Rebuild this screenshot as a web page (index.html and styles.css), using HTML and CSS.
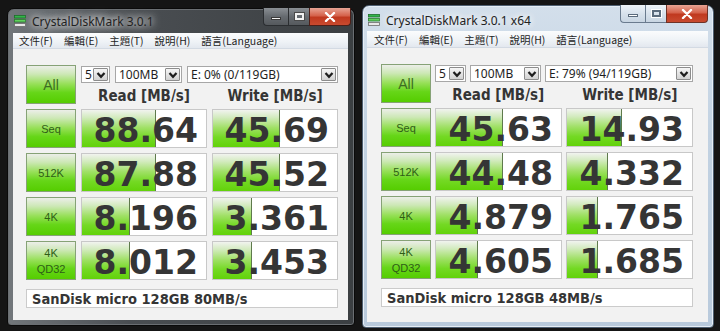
FILE: index.html
```html
<!DOCTYPE html>
<html lang="zh-Hant">
<head>
  <meta charset="UTF-8">
  <title>CrystalDiskMark</title>
  <link rel="stylesheet" href="styles.css">
</head>
<body>
  <div class="desktop">

    <!-- 32-bit run -->
    <div class="window dark">
      <div class="titlebar">
        <svg class="app-icon" width="12" height="12" viewBox="0 0 12 12">
          <rect x="0.5" y="0.5" width="11" height="2.5" fill="#33b44a" stroke="#1d6e2a" stroke-width="0.8"/>
          <rect x="0.5" y="4.5" width="11" height="2.5" fill="#5fd25c" stroke="#2b7d30" stroke-width="0.8"/>
          <rect x="0.5" y="8.5" width="11" height="3" fill="#e8e8e8" stroke="#6b6b6b" stroke-width="0.8"/>
        </svg>
        <span class="title">CrystalDiskMark 3.0.1</span>
        <div class="caption">
          <span class="cap min"><i></i></span>
          <span class="cap max"><i></i></span>
          <span class="cap close">
            <svg width="12" height="10" viewBox="0 0 12 10"><path d="M2 1 L10 9 M10 1 L2 9" stroke="#fff" stroke-width="2.4" stroke-linecap="round"/></svg>
          </span>
        </div>
      </div>
      <div class="menubar">
        <span>文件(F)</span><span>編輯(E)</span><span>主題(T)</span><span>說明(H)</span><span>語言(Language)</span>
      </div>
      <div class="client">
        <div class="bench">
          <div class="btn all">All</div>
          <div class="controls">
            <div class="combos">
              <div class="combo count"><span>5</span><b class="arrow"><svg width="10" height="8" viewBox="0 0 10 8"><path d="M1.5 2 L5 5.8 L8.5 2" fill="none" stroke="#1e1e1e" stroke-width="2.2"/></svg></b></div>
              <div class="combo size"><span>100MB</span><b class="arrow"><svg width="10" height="8" viewBox="0 0 10 8"><path d="M1.5 2 L5 5.8 L8.5 2" fill="none" stroke="#1e1e1e" stroke-width="2.2"/></svg></b></div>
              <div class="combo drive"><span>E: 0% (0/119GB)</span><b class="arrow"><svg width="10" height="8" viewBox="0 0 10 8"><path d="M1.5 2 L5 5.8 L8.5 2" fill="none" stroke="#1e1e1e" stroke-width="2.2"/></svg></b></div>
            </div>
            <div class="headers"><span>Read [MB/s]</span><span>Write [MB/s]</span></div>
          </div>

          <div class="btn">Seq</div>
          <div class="cell"><div class="bar" style="width:74px"></div><span class="val">88.64</span></div>
          <div class="cell"><div class="bar" style="width:67px"></div><span class="val">45.69</span></div>

          <div class="btn">512K</div>
          <div class="cell"><div class="bar" style="width:74px"></div><span class="val">87.88</span></div>
          <div class="cell"><div class="bar" style="width:67px"></div><span class="val">45.52</span></div>

          <div class="btn">4K</div>
          <div class="cell"><div class="bar" style="width:48px"></div><span class="val">8.196</span></div>
          <div class="cell"><div class="bar" style="width:39px"></div><span class="val">3.361</span></div>

          <div class="btn">4K<br>QD32</div>
          <div class="cell"><div class="bar" style="width:48px"></div><span class="val">8.012</span></div>
          <div class="cell"><div class="bar" style="width:39px"></div><span class="val">3.453</span></div>

          <div class="name">SanDisk micro 128GB 80MB/s</div>
        </div>
      </div>
    </div>

    <!-- 64-bit run -->
    <div class="window light">
      <div class="titlebar">
        <svg class="app-icon" width="12" height="12" viewBox="0 0 12 12">
          <rect x="0.5" y="0.5" width="11" height="2.5" fill="#33b44a" stroke="#1d6e2a" stroke-width="0.8"/>
          <rect x="0.5" y="4.5" width="11" height="2.5" fill="#5fd25c" stroke="#2b7d30" stroke-width="0.8"/>
          <rect x="0.5" y="8.5" width="11" height="3" fill="#e8e8e8" stroke="#6b6b6b" stroke-width="0.8"/>
        </svg>
        <span class="title">CrystalDiskMark 3.0.1 x64</span>
        <div class="caption">
          <span class="cap min"><i></i></span>
          <span class="cap max"><i></i></span>
          <span class="cap close">
            <svg width="12" height="10" viewBox="0 0 12 10"><path d="M2 1 L10 9 M10 1 L2 9" stroke="#fff" stroke-width="2.4" stroke-linecap="round"/></svg>
          </span>
        </div>
      </div>
      <div class="menubar">
        <span>文件(F)</span><span>編輯(E)</span><span>主題(T)</span><span>說明(H)</span><span>語言(Language)</span>
      </div>
      <div class="client">
        <div class="bench">
          <div class="btn all">All</div>
          <div class="controls">
            <div class="combos">
              <div class="combo count"><span>5</span><b class="arrow"><svg width="10" height="8" viewBox="0 0 10 8"><path d="M1.5 2 L5 5.8 L8.5 2" fill="none" stroke="#1e1e1e" stroke-width="2.2"/></svg></b></div>
              <div class="combo size"><span>100MB</span><b class="arrow"><svg width="10" height="8" viewBox="0 0 10 8"><path d="M1.5 2 L5 5.8 L8.5 2" fill="none" stroke="#1e1e1e" stroke-width="2.2"/></svg></b></div>
              <div class="combo drive"><span>E: 79% (94/119GB)</span><b class="arrow"><svg width="10" height="8" viewBox="0 0 10 8"><path d="M1.5 2 L5 5.8 L8.5 2" fill="none" stroke="#1e1e1e" stroke-width="2.2"/></svg></b></div>
            </div>
            <div class="headers"><span>Read [MB/s]</span><span>Write [MB/s]</span></div>
          </div>

          <div class="btn">Seq</div>
          <div class="cell"><div class="bar" style="width:67px"></div><span class="val">45.63</span></div>
          <div class="cell"><div class="bar" style="width:55px"></div><span class="val">14.93</span></div>

          <div class="btn">512K</div>
          <div class="cell"><div class="bar" style="width:67px"></div><span class="val">44.48</span></div>
          <div class="cell"><div class="bar" style="width:41px"></div><span class="val">4.332</span></div>

          <div class="btn">4K</div>
          <div class="cell"><div class="bar" style="width:42px"></div><span class="val">4.879</span></div>
          <div class="cell"><div class="bar" style="width:31px"></div><span class="val">1.765</span></div>

          <div class="btn">4K<br>QD32</div>
          <div class="cell"><div class="bar" style="width:42px"></div><span class="val">4.605</span></div>
          <div class="cell"><div class="bar" style="width:31px"></div><span class="val">1.685</span></div>

          <div class="name">SanDisk micro 128GB 48MB/s</div>
        </div>
      </div>
    </div>

  </div>
</body>
</html>
```

FILE: styles.css
```css
* {
  box-sizing: border-box;
  margin: 0;
  padding: 0;
}

body {
  background-color: #151515;
  font-family: "Noto Sans", "Noto Sans CJK TC", sans-serif;
  overflow: hidden;
}

.desktop {
  display: flex;
  align-items: flex-start;
  gap: 7px;
  padding-left: 7px;
  height: 331px;
}

/* window chrome */
.window {
  display: flex;
  flex-direction: column;
  border-radius: 7px 7px 4px 4px;
  padding: 0 6px 5px 5px;
}

.window.dark {
  width: 348px;
  height: 318px;
  margin-top: 8px;
  background: linear-gradient(to right, #72777b 0%, #4a4e52 35%, #3b3f42 100%);
  border: 1px solid #0a0a0a;
  box-shadow: inset 0 0 0 1px #6a6e72;
}

.window.light {
  width: 352px;
  height: 323px;
  margin-top: 5px;
  background: linear-gradient(to bottom, #d3dfeb 0%, #c2d2e2 40%, #b9cadc 100%);
  border: 1px solid #4f6072;
  box-shadow: inset 0 0 0 1px #e6eef6;
  padding: 0 5px 5px 4px;
}

.titlebar {
  display: flex;
  align-items: flex-start;
  height: 24px;
}

.light .titlebar {
  height: 25px;
}

.app-icon {
  margin: 6px 0 0 1px;
  flex: none;
}

.light .app-icon {
  margin-top: 8px;
}

.title {
  margin: 4px 0 0 6px;
  font-size: 12px;
  color: #222;
  text-shadow: 0 0 6px #fff, 0 0 10px rgba(255, 255, 255, 0.85), 0 0 14px rgba(255, 255, 255, 0.6);
}

.light .title {
  margin-top: 6px;
}

.caption {
  display: flex;
  margin-left: auto;
  margin-right: -3px;
  margin-top: -1px;
}

.light .caption {
  margin-right: 0;
}

.cap {
  display: flex;
  align-items: center;
  justify-content: center;
  height: 18px;
  border: 1px solid #2b2e31;
  border-top: none;
}

.cap.min {
  width: 25px;
  border-radius: 0 0 0 4px;
  border-right: none;
}

.cap.max {
  width: 21px;
  border-right: none;
}

.cap.close {
  width: 42px;
  border-radius: 0 0 4px 0;
  border-color: #4d1f18;
  background: linear-gradient(to bottom, #e8a494 0%, #d5634c 45%, #c0391f 55%, #c84a2f 100%);
}

.dark .cap.min,
.dark .cap.max {
  background: linear-gradient(to bottom, #8a8f94 0%, #666b70 50%, #55595d 100%);
}

.light .cap {
  border-color: #6a7b8e;
}

.light .cap.min,
.light .cap.max {
  background: linear-gradient(to bottom, #eef3f8 0%, #d8e2ec 50%, #c8d5e2 100%);
}

.light .cap.close {
  border-color: #6e3226;
}

.cap.min i {
  display: block;
  width: 10px;
  height: 3px;
  margin-top: 4px;
  background: #f2f2f2;
  border: 1px solid #3a3a3a;
}

.cap.max i {
  display: block;
  width: 9px;
  height: 7px;
  border: 2px solid #f2f2f2;
  outline: 1px solid #4a4a4a;
}

.light .cap.min i,
.light .cap.max i {
  border-color: #5b6b7c;
  outline-color: #ffffff;
}

.light .cap.min i {
  background: #ffffff;
}

/* menu */
.menubar {
  display: flex;
  align-items: center;
  height: 16px;
  padding-left: 6px;
  gap: 11px;
  font-family: "Noto Sans CJK TC", "Noto Sans", sans-serif;
  font-size: 10.5px;
  color: #1e1e1e;
  background: linear-gradient(to bottom, #fbfcfd 0%, #eef2f6 60%, #e3e8ef 100%);
  border-bottom: 1px solid #d3dae3;
}

.light .menubar {
  height: 17px;
  padding-left: 7px;
}

/* client area */
.client {
  flex: 1;
  background-color: #f2f2f2;
  padding: 16px 0 0 13px;
}

.light .client {
  padding-left: 14px;
}

.bench {
  display: grid;
  grid-template-columns: 50px 126px 126px;
  grid-template-rows: repeat(5, 39px) 23px;
  column-gap: 5px;
  row-gap: 5px;
}

.light .bench {
  grid-template-columns: 50px 127px 127px;
  column-gap: 4px;
}

.btn {
  display: flex;
  align-items: center;
  justify-content: center;
  text-align: center;
  border: 1px solid #86a276;
  background: linear-gradient(to bottom, #eceee9 0%, #cde8b6 22%, #98e05a 48%, #66d618 72%, #55cd00 100%);
  font-family: "Liberation Sans", sans-serif;
  font-size: 11px;
  line-height: 16px;
  color: #2f5d17;
}

.btn.all {
  font-size: 14px;
  color: #3d6d22;
}

.controls {
  grid-column: 2 / 4;
  display: flex;
  flex-direction: column;
}

.combos {
  display: flex;
  gap: 5px;
  margin-top: 1px;
  height: 17px;
}

.light .combos {
  gap: 4px;
}

.combo {
  display: flex;
  align-items: center;
  padding-right: 1px;
  background: #fff;
  border: 1px solid #a7a7a7;
  font-size: 12px;
  color: #1e1e1e;
}

.combo span {
  flex: 1;
  padding-left: 3px;
  white-space: nowrap;
}

.combo.count { width: 29px; }
.combo.size { width: 67px; }
.combo.drive { flex: 1; }

.light .combo.count { width: 31px; }
.light .combo.size { width: 71px; }

.arrow {
  display: flex;
  align-items: center;
  justify-content: center;
  width: 15px;
  height: 13px;
  border: 1px solid #8c8c8c;
  border-radius: 1px;
  background: linear-gradient(to bottom, #f6f6f6 0%, #e4e4e4 50%, #d2d2d2 100%);
}

.headers {
  display: grid;
  grid-template-columns: 1fr 1fr;
  column-gap: 5px;
  margin-top: 5px;
  font-family: "DejaVu Sans Condensed", "DejaVu Sans", sans-serif;
  font-weight: bold;
  font-size: 15px;
  color: #353535;
  text-align: center;
  line-height: 16px;
}

/* result cells */
.cell {
  position: relative;
  display: flex;
  align-items: center;
  justify-content: flex-end;
  padding: 3px 8px 0 0;
  background: #fff;
  border: 1px solid #c8c8c8;
  overflow: hidden;
}

.bar {
  position: absolute;
  left: 0;
  top: 0;
  bottom: 0;
  border-right: 1px solid #5e7a4c;
  background: linear-gradient(to bottom, #f1f3ef 0%, #d3ebbf 20%, #a0e066 48%, #74d924 74%, #62d20a 100%);
}

.val {
  position: relative;
  font-family: "DejaVu Sans", sans-serif;
  font-weight: bold;
  font-size: 33px;
  line-height: 1;
  color: #353535;
}

.name {
  grid-column: 1 / 4;
  margin-top: 4px;
  display: flex;
  align-items: center;
  padding-left: 5px;
  background: #fff;
  border: 1px solid #cbcbcb;
  font-family: "DejaVu Sans Condensed", "DejaVu Sans", sans-serif;
  font-weight: bold;
  font-size: 14.5px;
  color: #353535;
}
```
